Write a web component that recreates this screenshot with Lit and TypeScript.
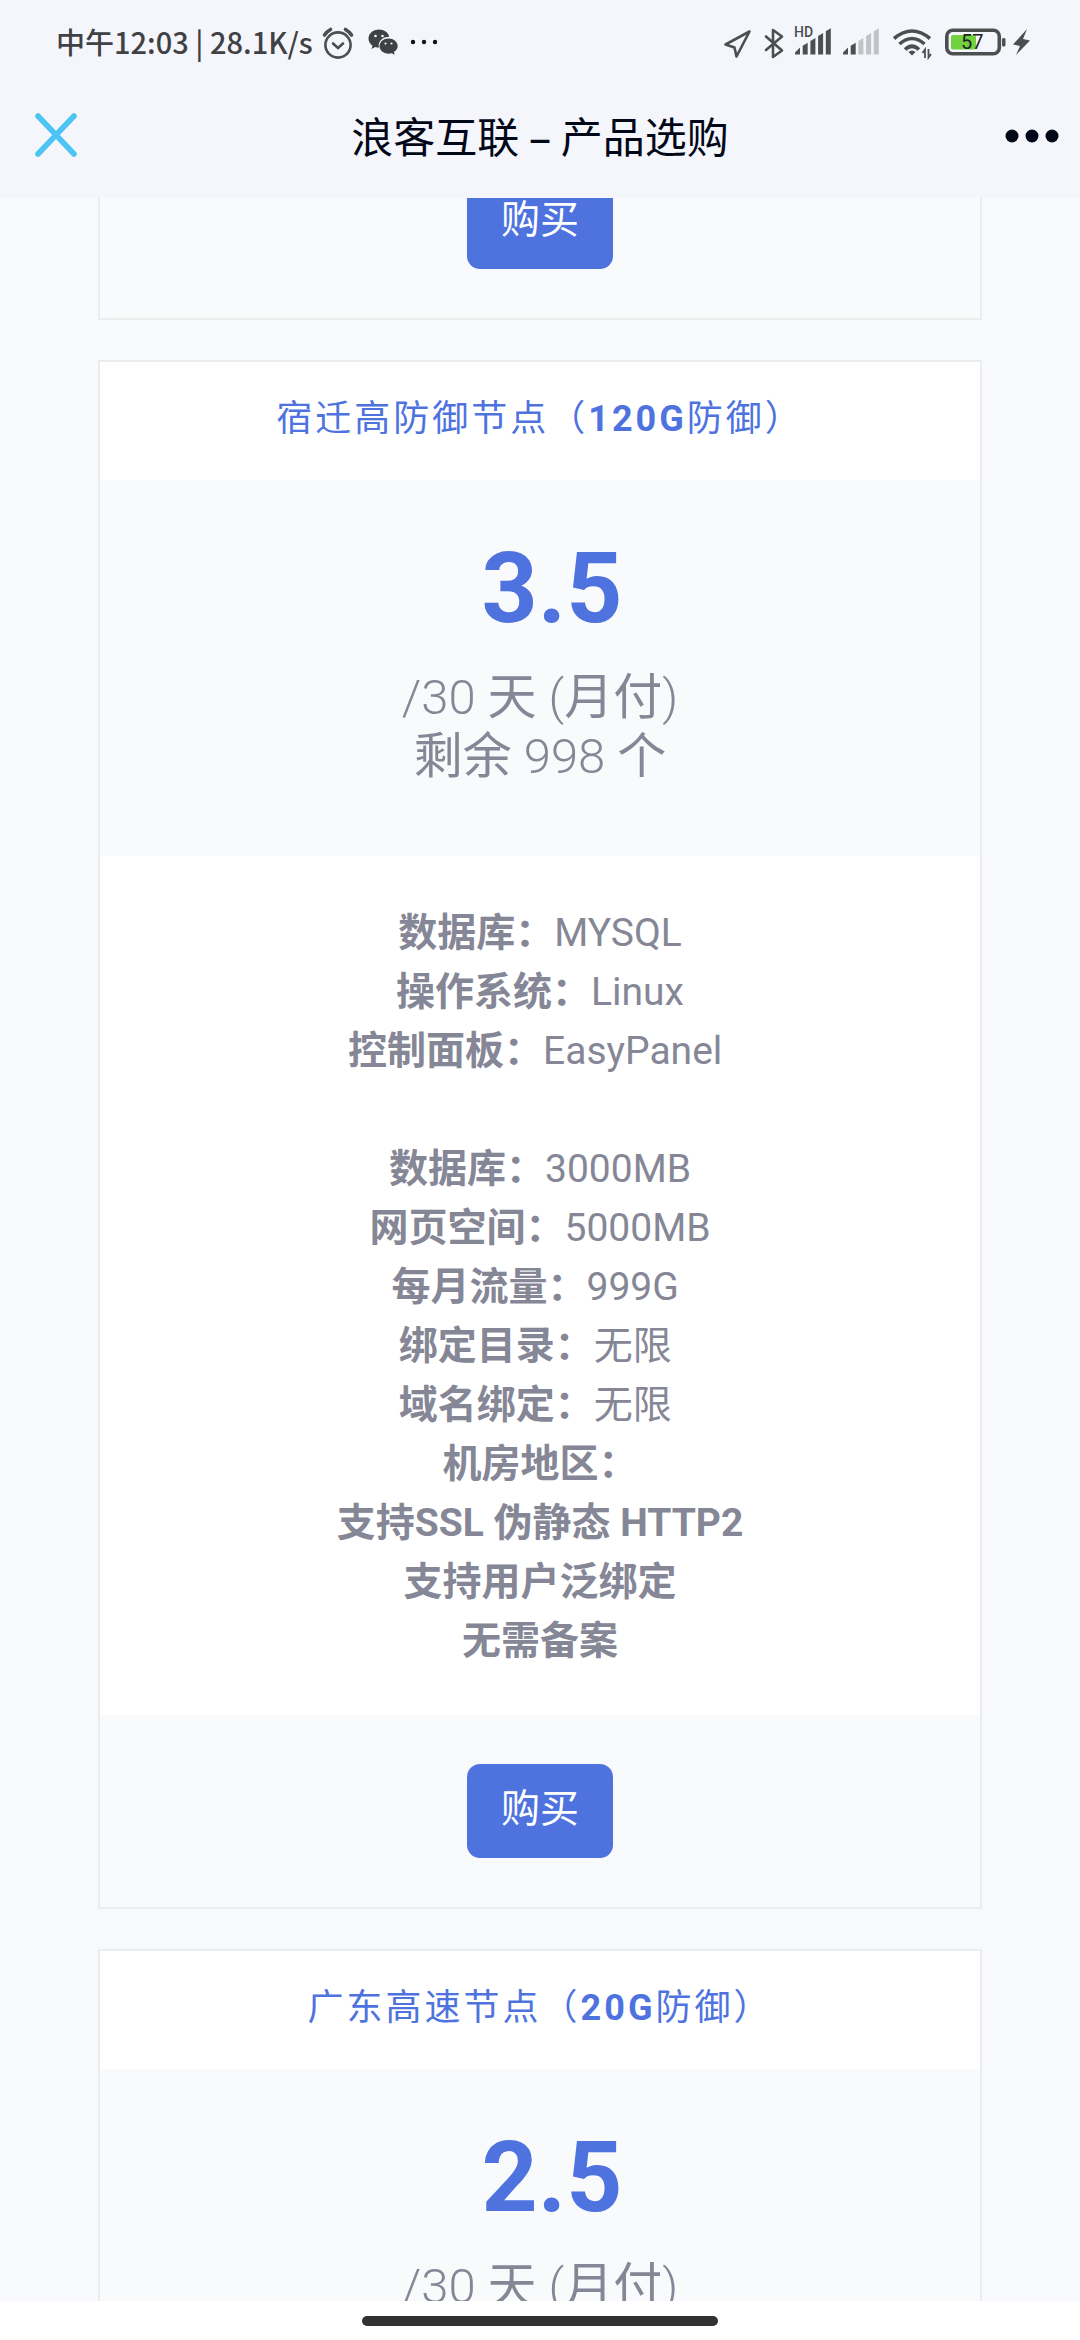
import { LitElement, html, css, svg, nothing } from "lit";
import { customElement, property } from "lit/decorators.js";

interface Spec {
  label?: string;
  value?: string;
}

interface Plan {
  name: string;
  defense: string;
  price: string;
  period: string;
  stock?: string;
  specs: Spec[];
}

const plans: Plan[] = [
  {
    name: "宿迁高防御节点",
    defense: "120G",
    price: "3.5",
    period: "/30 天 (月付)",
    stock: "剩余 998 个",
    specs: [
      { label: "数据库：", value: "MYSQL" },
      { label: "操作系统：", value: "Linux" },
      { label: "控制面板：", value: "EasyPanel\u00a0" },
      {},
      { label: "数据库：", value: "3000MB" },
      { label: "网页空间：", value: "5000MB" },
      { label: "每月流量：", value: "999G\u00a0" },
      { label: "绑定目录：", value: "无限\u00a0" },
      { label: "域名绑定：", value: "无限\u00a0" },
      { label: "机房地区：" },
      { label: "支持SSL 伪静态 HTTP2" },
      { label: "支持用户泛绑定" },
      { label: "无需备案" },
    ],
  },
  {
    name: "广东高速节点",
    defense: "20G",
    price: "2.5",
    period: "/30 天 (月付)",
    specs: [],
  },
];

/** Wraps each run of Han characters so that it can carry its own weight. */
const withHan = (text: string) =>
  text
    .split(/([\u4e00-\u9fff]+)/)
    .filter(Boolean)
    .map((part) => (/[\u4e00-\u9fff]/.test(part) ? html`<span class="han">${part}</span>` : part));

@customElement("status-bar")
class StatusBar extends LitElement {
  static styles = css`
    :host {
      display: flex;
      justify-content: space-between;
      align-items: center;
      height: 84px;
      padding: 0 48px 0 56px;
      color: #3f4144;
      font: 500 29px/36px "Noto Sans CJK SC", sans-serif;
    }
    .side {
      display: flex;
      align-items: center;
      gap: 1px;
    }
    .clock {
      padding-bottom: 3px;
      white-space: nowrap;
    }
    svg {
      display: block;
    }
    .small {
      font: 500 14px Roboto, sans-serif;
    }
    .level {
      font: 400 20px Roboto, sans-serif;
    }
  `;

  render() {
    const bar = (i: number, on: boolean) => {
      const x = i * 7.7;
      const top = 23.5 - i * 4.8;
      return svg`
        <path
          d="M${x} ${top + (i ? 3 : 5)} L${x + 5} ${top} V30.5 H${x} Z"
          fill="#4c4e50"
          opacity=${on ? 1 : 0.3}
        />`;
    };
    return html`
      <div class="side">
        <span class="clock">中午12:03 | 28.1K/s</span>
        <svg width="126" height="36" viewBox="314 24 126 36" fill="none" aria-hidden="true">
          <g stroke="#4c4e50" stroke-width="2.6" stroke-linecap="round">
            <circle cx="338" cy="45" r="12.6" />
            <path d="M333 43.500l5 4.500 5-4.500" />
            <path stroke-width="3.600" d="M324.500 35q2.500-3.500 6-5.500M351.500 35q-2.500-3.500-6-5.500" />
          </g>
          <g fill="#3f4144">
            <path d="M379 29.500c-6 0-10.500 4-10.500 9 0 3 1.500 5.500 4 7.200l-1 3.300 3.800-2c1.200.4 2.500.6 3.700.6-1.600-6 3.500-10.800 10.300-10.800-.9-4.300-5.200-7.300-10.300-7.300z" />
            <path d="M388.500 38.500c-5 0-9 3.400-9 7.600s4 7.600 9 7.600c1.100 0 2.200-.2 3.200-.5l3 1.600-.8-2.700c2.500-1.500 3.800-3.600 3.800-6 0-4.200-4.200-7.600-9.200-7.600z" />
          </g>
          <g fill="#f4f6fb">
            <circle cx="375.500" cy="36" r="1.300" /><circle cx="382.500" cy="36" r="1.300" />
            <circle cx="385.500" cy="43.500" r="1.100" /><circle cx="391.500" cy="43.500" r="1.100" />
          </g>
          <g fill="#111"><circle cx="413" cy="42" r="2.200" /><circle cx="424" cy="42" r="2.200" /><circle cx="435" cy="42" r="2.200" /></g>
        </svg>
      </div>
      <svg width="312" height="36" viewBox="720 24 312 36" fill="none" aria-hidden="true">
        <g stroke="#4c4e50" stroke-width="2.600" stroke-linejoin="round">
          <path d="M749.500 31.500 L725.500 44.500 L734.500 47.500 L736.500 56.500 Z" />
          <path stroke-linecap="round" d="M766 36.500L782 50.500 773 57V30L782 36.500 766 50" />
        </g>
        <text class="small" x="794" y="37" fill="#4c4e50">HD</text>
        <g transform="translate(795 24)">${[0, 1, 2, 3, 4].map((i) => bar(i, true))}</g>
        <g transform="translate(843 24)">${[0, 1, 2, 3, 4].map((i) => bar(i, i < 2))}</g>
        <g stroke="#4c4e50" stroke-width="3.600">
          <path d="M894 38.500q18-15 36 0M899.500 44q12.500-11 25 0M905 49.500q7-6.500 14 0" />
        </g>
        <path d="M908.500 52q3.500-3 7 0l-3.500 3.500z" fill="#4c4e50" />
        <path d="M925 58V49.500l-2.500 3.500M928.500 49v8.500l2.500-3.500" stroke="#4c4e50" stroke-width="1.800" />
        <rect x="946.800" y="30.300" width="52.500" height="23.500" rx="6" stroke="#4c4e50" stroke-width="3.600" />
        <rect x="951" y="35" width="25" height="14.500" rx="2" fill="#72d13f" />
        <rect x="1002" y="38" width="3.500" height="8.500" rx="1.500" fill="#4c4e50" />
        <text class="level" x="961" y="49" fill="#222">57</text>
        <path d="M1027 29L1013 44.500l7 1.500-4 9 14-14.500-7-1.500z" fill="#4c4e50" />
      </svg>
    `;
  }
}

@customElement("title-bar")
class TitleBar extends LitElement {
  static styles = css`
    :host {
      display: grid;
      grid-template-columns: 100px 1fr 100px;
      align-items: center;
      height: 102px;
      padding-bottom: 12px;
      color: #030818;
    }
    .title {
      margin: 0;
      text-align: center;
      font: 400 42px/60px "Noto Sans CJK SC", sans-serif;
      white-space: nowrap;
    }
    .dash {
      font-weight: 500;
    }
    .action {
      height: 72px;
      padding: 0;
      border: 0;
      background: none;
      color: inherit;
    }
    svg {
      display: block;
    }
    .close {
      padding-left: 30px;
    }
    .more {
      justify-self: end;
      padding-right: 16px;
    }
  `;

  render() {
    return html`
      <button class="action close" aria-label="关闭">
        <svg width="52" height="52" viewBox="0 0 52 52" aria-hidden="true">
          <path d="M8 7l36 38M44 7L8 45" stroke="#4cc5f4" stroke-width="5.500" stroke-linecap="round" />
        </svg>
      </button>
      <h1 class="title">浪客互联 <span class="dash">–</span> 产品选购</h1>
      <button class="action more" aria-label="更多">
        <svg width="60" height="16" viewBox="0 0 60 16" fill="currentColor" aria-hidden="true">
          <circle cx="8" cy="9" r="6.500" /><circle cx="28" cy="9" r="6.500" /><circle cx="48" cy="9" r="6.500" />
        </svg>
      </button>
    `;
  }
}

@customElement("plan-card")
class PlanCard extends LitElement {
  static styles = css`
    :host {
      display: block;
      border: 2px solid #ebecec;
      background: #fff;
      color: #858796;
      text-align: center;
      font: 400 39px/59px Roboto, "Noto Sans CJK SC", sans-serif;
    }
    .name {
      margin: 0;
      padding: 30px 0 34px;
      color: #4e73df;
      font-size: 36px;
      font-weight: 400;
      line-height: 54px;
      letter-spacing: 3px;
    }
    .cost {
      padding: 50px 0 70px;
      background: #f8fafc;
    }
    .price {
      margin: 0 0 20px;
      padding-left: 24px;
      color: #4e73df;
      font-size: 98px;
      font-weight: 700;
      line-height: 118px;
    }
    .terms {
      margin: 0;
      font-size: 49px;
      font-weight: 300;
      line-height: 59px;
    }
    .han {
      font-weight: 400;
    }
    .specs {
      margin: 0;
      padding: 48px 0 44px;
      list-style: none;
    }
    .spec {
      min-height: 59px;
    }
    .foot {
      display: flex;
      justify-content: center;
      padding: 49px 0;
      background: #f8fafc;
    }
    .buy {
      padding: 16px 34px 19px;
      border: 0;
      border-radius: 13px;
      background: #4e73df;
      color: #fff;
      font: inherit;
    }
  `;

  @property({ attribute: false }) plan?: Plan;

  private renderPlan(plan: Plan) {
    return html`
      <h2 class="name">${plan.name}（<b>${plan.defense}</b>防御）</h2>
      <div class="cost">
        <p class="price">${plan.price}</p>
        <p class="terms">${withHan(plan.period)}${plan.stock ? html`<br />${withHan(plan.stock)}` : nothing}</p>
      </div>
      ${plan.specs.length
        ? html`<ul class="specs">
            ${plan.specs.map(
              (s) => html`<li class="spec">${s.label ? html`<b>${s.label}</b>` : nothing}${s.value ?? nothing}</li>`,
            )}
          </ul>`
        : nothing}
    `;
  }

  render() {
    return html`
      ${this.plan ? this.renderPlan(this.plan) : nothing}
      ${this.plan && !this.plan.specs.length
        ? nothing
        : html`<div class="foot"><button class="buy">购买</button></div>`}
    `;
  }
}

@customElement("app-root")
class AppRoot extends LitElement {
  static styles = css`
    :host {
      display: flex;
      flex-direction: column;
      height: 100vh;
      background: #f8f9fd;
    }
    .top {
      flex: none;
      background: #f4f6fb;
    }
    .view {
      flex: 1;
      min-height: 0;
      overflow: hidden;
    }
    .plans {
      display: flex;
      flex-direction: column;
      gap: 40px;
      margin-top: -74px;
      padding: 0 98px;
    }
    .nav {
      flex: none;
      display: flex;
      justify-content: center;
      align-items: center;
      height: 39px;
      background: #fff;
    }
    .handle {
      width: 33%;
      height: 10px;
      border-radius: 5px;
      background: #323232;
    }
  `;

  render() {
    return html`
      <header class="top">
        <status-bar></status-bar>
        <title-bar></title-bar>
      </header>
      <main class="view">
        <div class="plans">
          <plan-card></plan-card>
          ${plans.map((p) => html`<plan-card .plan=${p}></plan-card>`)}
        </div>
      </main>
      <footer class="nav"><div class="handle"></div></footer>
    `;
  }
}
